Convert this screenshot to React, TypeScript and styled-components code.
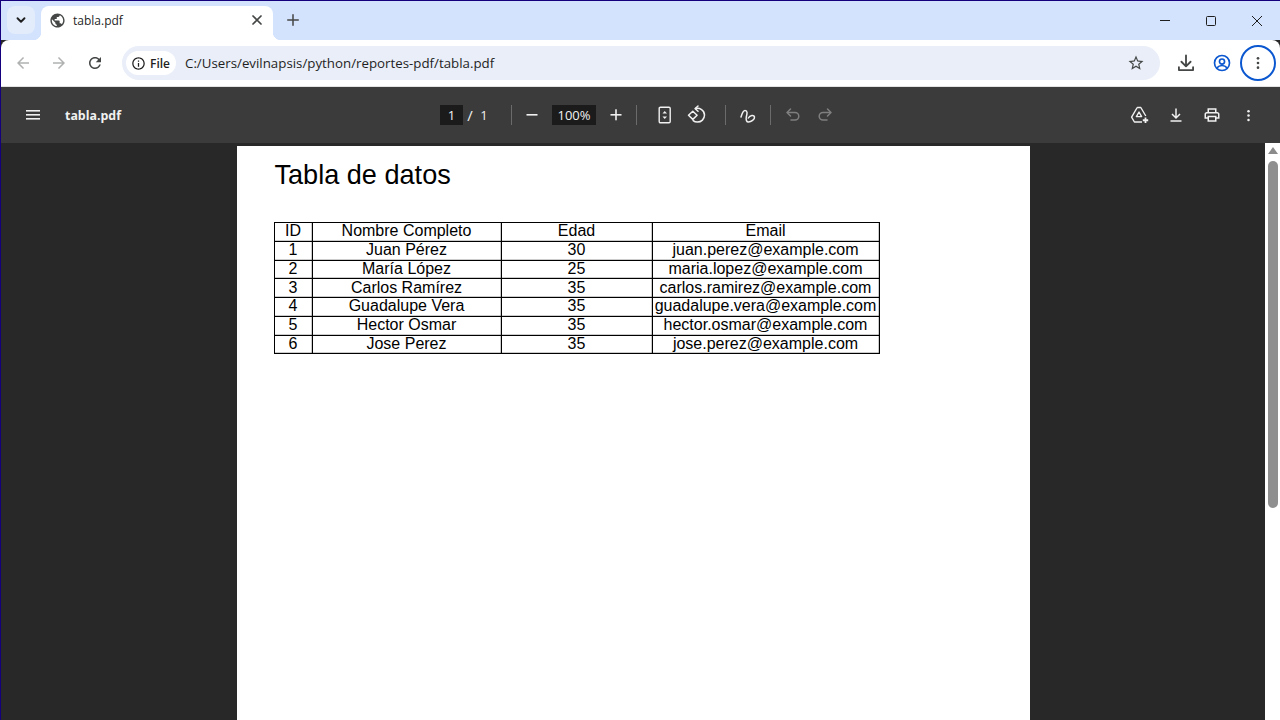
import React from 'react';
import styled, { createGlobalStyle } from 'styled-components';

const GlobalStyle = createGlobalStyle`
  html, body {
    margin: 0;
    padding: 0;
    height: 100%;
    overflow: hidden;
    background: #282828;
  }
`;

const Window = styled.div`
  width: 1280px;
  height: 720px;
  box-sizing: border-box;
  border-top: 1px solid #14007c;
  border-left: 1px solid #14007c;
  display: flex;
  flex-direction: column;
  overflow: hidden;
  font-family: 'Open Sans', 'Noto Sans', sans-serif;
`;

const TabStrip = styled.div`
  height: 39px;
  flex: none;
  background: #d3e3fd;
  display: flex;
  align-items: flex-start;
  padding-left: 6px;
`;

const TabSearch = styled.div`
  width: 28px;
  height: 28px;
  margin-top: 5px;
  border-radius: 8px;
  background: #e3ecfb;
  display: flex;
  align-items: center;
  justify-content: center;
  color: #1f1f1f;
`;

const Tab = styled.div`
  position: relative;
  width: 232px;
  height: 34px;
  margin: 5px 0 0 6px;
  box-sizing: border-box;
  padding: 0 8px 6px;
  border-radius: 8px 8px 0 0;
  background: #fff;
  display: flex;
  align-items: center;
  color: #444746;

  &::before,
  &::after {
    content: '';
    position: absolute;
    bottom: 0;
    width: 8px;
    height: 8px;
  }
  &::before {
    left: -8px;
    background: radial-gradient(circle at 0 0, transparent 8px, #fff 8.5px);
  }
  &::after {
    right: -8px;
    background: radial-gradient(circle at 100% 0, transparent 8px, #fff 8.5px);
  }
`;

const TabTitle = styled.span`
  flex: 1;
  margin-left: 7px;
  font-size: 12px;
  color: #1f1f1f;
`;

const NewTab = styled.div`
  width: 28px;
  height: 28px;
  margin: 5px 0 0 6px;
  display: flex;
  align-items: center;
  justify-content: center;
  color: #444746;
`;

const WindowControls = styled.div`
  margin-left: auto;
  display: flex;
  color: #1f1f1f;
`;

const WindowButton = styled.div`
  width: 46px;
  height: 39px;
  display: flex;
  align-items: center;
  justify-content: center;
`;

const NavBar = styled.div`
  height: 47px;
  flex: none;
  background: #fff;
  border-radius: 8px 8px 0 0;
  display: flex;
  align-items: center;
  padding: 0 4px 0 4px;
  box-sizing: border-box;
  border-bottom: 1px solid #e3e3e3;
`;

const NavButton = styled.div<{ $dim?: boolean }>`
  width: 36px;
  height: 36px;
  display: flex;
  align-items: center;
  justify-content: center;
  color: ${(p) => (p.$dim ? '#b0b1b1' : '#444746')};
`;

const Omnibox = styled.div`
  width: 1038px;
  height: 34px;
  margin-left: 9px;
  box-sizing: border-box;
  padding: 0 15px 0 4px;
  border-radius: 17px;
  background: #e9eef8;
  display: flex;
  align-items: center;
  color: #444746;
`;

const FileChip = styled.div`
  width: 50px;
  height: 24px;
  box-sizing: border-box;
  padding-left: 5px;
  border-radius: 12px;
  background: #fff;
  display: flex;
  align-items: center;
  gap: 4px;
  font-size: 12px;
  font-weight: 600;
  color: #1f1f1f;
`;

const UrlText = styled.span`
  flex: 1;
  margin-left: 9px;
  font-size: 13.3px;
  color: #1f1f1f;
`;

const ToolActions = styled.div`
  display: flex;
  align-items: center;
  margin-left: 8px;
`;

const ToolIcon = styled.div<{ $color?: string; $focus?: boolean }>`
  width: 36px;
  height: 36px;
  box-sizing: border-box;
  display: flex;
  align-items: center;
  justify-content: center;
  border-radius: 50%;
  color: ${(p) => p.$color || '#444746'};
  ${(p) => p.$focus && 'border: 2px solid #0b57d0;'}
`;

const PdfToolbar = styled.div`
  height: 56px;
  flex: none;
  background: #3b3b3b;
  display: flex;
  align-items: center;
  color: #f1f1f1;
`;

const PdfLeft = styled.div`
  width: 439px;
  flex: none;
  display: flex;
  align-items: center;
  box-sizing: border-box;
  padding-left: 14px;
`;

const PdfName = styled.span`
  margin-left: 14px;
  font-size: 12.4px;
  font-weight: 700;
  color: #f1f1f1;
`;

const PdfCenter = styled.div`
  display: flex;
  align-items: center;
`;

const PdfRight = styled.div`
  margin-left: auto;
  margin-right: 14px;
  display: flex;
  align-items: center;
`;

const PdfButton = styled.div<{ $w?: number; $ml?: number; $dim?: boolean }>`
  width: ${(p) => p.$w || 36}px;
  height: 36px;
  margin-left: ${(p) => p.$ml || 0}px;
  display: flex;
  align-items: center;
  justify-content: center;
  color: ${(p) => (p.$dim ? '#7f7f7f' : '#f1f1f1')};
`;

const NumberBox = styled.div<{ $w: number }>`
  width: ${(p) => p.$w}px;
  height: 20px;
  background: #1b1b1b;
  color: #f1f1f1;
  font-size: 13px;
  display: flex;
  align-items: center;
  justify-content: center;
`;

const PageLabel = styled.span<{ $w: number; $size?: number }>`
  width: ${(p) => p.$w}px;
  font-size: ${(p) => p.$size || 13}px;
  text-align: center;
  color: #f1f1f1;
`;

const Separator = styled.div<{ $ml?: number }>`
  width: 1px;
  height: 20px;
  margin-left: ${(p) => p.$ml || 0}px;
  background: #6b6b6b;
`;

const ViewerArea = styled.div`
  flex: 1;
  min-height: 0;
  display: flex;
  background: #282828;
`;

const PageScroller = styled.div`
  flex: 1;
  overflow: hidden;
  display: flex;
  justify-content: center;
`;

const PdfPage = styled.div`
  width: 793px;
  height: 1122px;
  margin-top: 3px;
  box-sizing: border-box;
  padding: 13px 0 0 37px;
  background: #fff;
  font-family: 'Liberation Sans', Arial, sans-serif;
  color: #000;
`;

const DocTitle = styled.h1`
  margin: 0 0 0 1px;
  height: 63px;
  font-size: 27.1px;
  font-weight: 400;
  line-height: 31px;
`;

const DataTable = styled.table`
  width: 605px;
  border-collapse: collapse;
  table-layout: fixed;
  font-size: 16px;

  th, td {
    height: 18.75px;
    padding: 0 0 1px;
    border: 1px solid #000;
    box-sizing: border-box;
    font-weight: 400;
    text-align: center;
    line-height: 16px;
    white-space: nowrap;
    box-shadow: inset 0 -1px 0 rgba(0, 0, 0, 0.2), inset -1px 0 0 rgba(0, 0, 0, 0.2);
  }

  col:nth-child(1) { width: 38px; }
  col:nth-child(2) { width: 189px; }
  col:nth-child(3) { width: 151px; }
  col:nth-child(4) { width: 227px; }
`;

const Scrollbar = styled.div`
  width: 15px;
  flex: none;
  background: #fff;
  display: flex;
  flex-direction: column;
  align-items: center;
`;

const ScrollArrow = styled.div`
  width: 0;
  height: 0;
  margin-top: 4px;
  border-left: 5px solid transparent;
  border-right: 5px solid transparent;
  border-bottom: 7px solid #8b8b8b;
`;

const ScrollThumb = styled.div`
  width: 10px;
  height: 347px;
  margin-top: 7px;
  border-radius: 5px;
  background: #8f8f8f;
`;

const rows = [
  ['1', 'Juan Pérez', '30', 'juan.perez@example.com'],
  ['2', 'María López', '25', 'maria.lopez@example.com'],
  ['3', 'Carlos Ramírez', '35', 'carlos.ramirez@example.com'],
  ['4', 'Guadalupe Vera', '35', 'guadalupe.vera@example.com'],
  ['5', 'Hector Osmar', '35', 'hector.osmar@example.com'],
  ['6', 'Jose Perez', '35', 'jose.perez@example.com'],
];

const Fill = ({ d, size = 16 }: { d: string; size?: number }) => (
  <svg width={size} height={size} viewBox="0 0 24 24" fill="currentColor">
    <path d={d} />
  </svg>
);

const Line = ({ size = 16, sw = 2, children }: { size?: number; sw?: number; children: React.ReactNode }) => (
  <svg width={size} height={size} viewBox="0 0 24 24" fill="none" stroke="currentColor" strokeWidth={sw} strokeLinecap="round" strokeLinejoin="round">
    {children}
  </svg>
);

const globe = 'M12 2C6.48 2 2 6.48 2 12s4.48 10 10 10 10-4.48 10-10S17.52 2 12 2zm-1 17.93c-3.95-.49-7-3.85-7-7.93 0-.62.08-1.21.21-1.79L9 15v1c0 1.1.9 2 2 2v1.93zm6.9-2.54c-.26-.81-1-1.39-1.9-1.39h-1v-3c0-.55-.45-1-1-1H8v-2h2c.55 0 1-.45 1-1V7h2c1.1 0 2-.9 2-2v-.41c2.93 1.19 5 4.06 5 7.41 0 2.08-.8 3.97-2.1 5.39z';
const back = 'M20 11H7.83l5.59-5.59L12 4l-8 8 8 8 1.41-1.41L7.83 13H20v-2z';
const forward = 'M4 11h12.17l-5.59-5.59L12 4l8 8-8 8-1.41-1.41L16.17 13H4v-2z';
const reload = 'M17.65 6.35C16.2 4.9 14.21 4 12 4c-4.42 0-7.99 3.58-7.99 8s3.57 8 7.99 8c3.73 0 6.84-2.55 7.73-6h-2.08c-.82 2.33-3.04 4-5.65 4-3.31 0-6-2.69-6-6s2.69-6 6-6c1.66 0 3.14.69 4.22 1.78L13 11h7V4l-2.35 2.35z';
const info = 'M11 7h2v2h-2zm0 4h2v6h-2zm1-9C6.48 2 2 6.48 2 12s4.48 10 10 10 10-4.48 10-10S17.52 2 12 2zm0 18c-4.41 0-8-3.59-8-8s3.59-8 8-8 8 3.59 8 8-3.59 8-8 8z';
const star = 'M22 9.24l-7.19-.62L12 2 9.19 8.63 2 9.24l5.46 4.73L5.82 21 12 17.27 18.18 21l-1.63-7.03L22 9.24zM12 15.4l-3.76 2.27 1-4.28-3.32-2.88 4.38-.38L12 6.1l1.71 4.04 4.38.38-3.32 2.88 1 4.28L12 15.4z';
const printer = 'M19 8h-1V3H6v5H5c-1.66 0-3 1.34-3 3v6h4v4h12v-4h4v-6c0-1.66-1.34-3-3-3zM8 5h8v3H8V5zm8 14H8v-4h8v4zm4-4h-2v-2H6v2H4v-4c0-.55.45-1 1-1h14c.55 0 1 .45 1 1v4z';

const Dots = ({ size = 16 }: { size?: number }) => (
  <svg width={size} height={size} viewBox="0 0 24 24" fill="currentColor">
    <circle cx="12" cy="5" r="2" />
    <circle cx="12" cy="12" r="2" />
    <circle cx="12" cy="19" r="2" />
  </svg>
);

const App = () => {
  return (
    <Window>
      <GlobalStyle />
      <TabStrip>
        <TabSearch>
          <Line size={14} sw={3.2}><path d="M6 9l6 6 6-6" /></Line>
        </TabSearch>
        <Tab>
          <Fill d={globe} size={17} />
          <TabTitle>tabla.pdf</TabTitle>
          <Line size={16} sw={2.6}><path d="M6 6l12 12M18 6L6 18" /></Line>
        </Tab>
        <NewTab>
          <Line size={18} sw={2}><path d="M12 5v14M5 12h14" /></Line>
        </NewTab>
        <WindowControls>
          <WindowButton>
            <svg width="12" height="12" viewBox="0 0 12 12" fill="none" stroke="currentColor"><path d="M1 5.5h10" /></svg>
          </WindowButton>
          <WindowButton>
            <svg width="12" height="12" viewBox="0 0 12 12" fill="none" stroke="currentColor"><rect x="1.5" y="1.5" width="9" height="9" rx="1" /></svg>
          </WindowButton>
          <WindowButton>
            <svg width="12" height="12" viewBox="0 0 12 12" fill="none" stroke="currentColor"><path d="M1 1l10 10M11 1L1 11" /></svg>
          </WindowButton>
        </WindowControls>
      </TabStrip>

      <NavBar>
        <NavButton $dim><Fill d={back} size={18} /></NavButton>
        <NavButton $dim><Fill d={forward} size={18} /></NavButton>
        <NavButton><Fill d={reload} size={18} /></NavButton>
        <Omnibox>
          <FileChip>
            <Fill d={info} size={15} />
            File
          </FileChip>
          <UrlText>C:/Users/evilnapsis/python/reportes-pdf/tabla.pdf</UrlText>
          <Fill d={star} size={18} />
        </Omnibox>
        <ToolActions>
          <ToolIcon>
            <Line size={20} sw={2.2}>
              <path d="M12 3v13M6.5 10.5L12 16l5.5-5.5M3.5 17v3.5h17V17" />
            </Line>
          </ToolIcon>
          <ToolIcon $color="#0b57d0">
            <svg width="18" height="18" viewBox="0 0 24 24" fill="none" stroke="currentColor" strokeWidth="2.2">
              <circle cx="12" cy="12" r="10" />
              <circle cx="12" cy="10" r="3.4" />
              <path d="M5.2 18.5c2-2.4 4.2-3.2 6.8-3.2s4.8.8 6.8 3.2" />
            </svg>
          </ToolIcon>
          <ToolIcon $focus><Dots /></ToolIcon>
        </ToolActions>
      </NavBar>

      <PdfToolbar>
        <PdfLeft>
          <PdfButton>
            <svg width="16" height="12" viewBox="0 0 16 12" fill="currentColor">
              <rect x="1" y="1" width="14" height="1.6" />
              <rect x="1" y="5" width="14" height="1.6" />
              <rect x="1" y="9" width="14" height="1.6" />
            </svg>
          </PdfButton>
          <PdfName>tabla.pdf</PdfName>
        </PdfLeft>
        <PdfCenter>
          <NumberBox $w={23}>1</NumberBox>
          <PageLabel $w={14} $size={15}>/</PageLabel>
          <PageLabel $w={14}>1</PageLabel>
          <PdfButton $w={20} />
          <Separator />
          <PdfButton $w={40}>
            <svg width="14" height="14" viewBox="0 0 14 14" fill="currentColor"><rect x="1.5" y="6" width="11" height="1.6" /></svg>
          </PdfButton>
          <NumberBox $w={44}>100%</NumberBox>
          <PdfButton $w={40}>
            <svg width="14" height="14" viewBox="0 0 14 14" fill="currentColor"><rect x="1.5" y="6" width="11" height="1.6" /><rect x="6.2" y="1.3" width="1.6" height="11" /></svg>
          </PdfButton>
          <Separator />
          <PdfButton $ml={10}>
            <svg width="14" height="18" viewBox="0 0 14 18" fill="none" stroke="currentColor" strokeWidth="1.4">
              <rect x="1.2" y="1.2" width="11" height="15.6" rx="1.2" />
              <path d="M4.5 7.5L6.7 5 9 7.5z" fill="currentColor" stroke="none" />
              <path d="M4.5 10.5L6.7 13 9 10.5z" fill="currentColor" stroke="none" />
            </svg>
          </PdfButton>
          <PdfButton $w={28}>
            <svg width="20" height="20" viewBox="0 0 20 20" fill="none" stroke="currentColor" strokeWidth="1.5" strokeLinejoin="round" strokeLinecap="round">
              <path d="M1.5 10.2L5.8 6.2l4.3 4L5.8 14.4z" />
              <path d="M8.5 3.6c4.2-1 9 1.6 9 6.5 0 4-3.2 7-7 7-1.700 0-3.200-.5-4.300-1.500" />
              <path d="M11 1L8.2 3.6 11 6.2" />
            </svg>
          </PdfButton>
          <Separator $ml={14} />
          <PdfButton $w={42}>
            <svg width="18" height="18" viewBox="0 0 18 18" fill="none" stroke="currentColor" strokeWidth="1.5" strokeLinecap="round" strokeLinejoin="round">
              <path d="M3 11C4 8 5 4.600 7 4.600 10 4.600 9 8 8.300 11 7.800 14 8.500 16 10.500 16 13 16 17 13.500 16.500 11 16 8.500 12 9 10.300 12" />
            </svg>
          </PdfButton>
          <Separator $ml={2} />
          <PdfButton $w={44} $dim>
            <svg width="16" height="16" viewBox="0 0 16 16" fill="none" stroke="currentColor" strokeWidth="1.5" strokeLinecap="round" strokeLinejoin="round">
              <path d="M5.5 2L2 5.5 5.5 9" />
              <path d="M2.5 5.5H10a3.8 3.8 0 0 1 0 7.600H6" />
            </svg>
          </PdfButton>
          <PdfButton $w={20} $dim>
            <svg width="16" height="16" viewBox="0 0 16 16" fill="none" stroke="currentColor" strokeWidth="1.5" strokeLinecap="round" strokeLinejoin="round">
              <path d="M10.5 2L14 5.5 10.5 9" />
              <path d="M13.5 5.5H6a3.8 3.8 0 0 0 0 7.600h4" />
            </svg>
          </PdfButton>
        </PdfCenter>
        <PdfRight>
          <PdfButton>
            <svg width="20" height="18" viewBox="0 0 20 18" fill="none" stroke="currentColor" strokeWidth="1.4" strokeLinejoin="round">
              <path d="M7.2 1.500h3.600l5 8.500M7.200 1.500L1.600 11.200l2.800 4.800h7.600" />
              <path d="M9 6l-2.600 4.600h5.200z" />
              <path d="M15.500 11.500v5.500M12.800 14.250h5.400" strokeWidth="1.8" />
            </svg>
          </PdfButton>
          <PdfButton>
            <svg width="16" height="16" viewBox="0 0 16 16" fill="none" stroke="currentColor" strokeWidth="1.5">
              <path d="M8 1.500v9M4 7l4 4 4-4M2.500 14h11" />
            </svg>
          </PdfButton>
          <PdfButton><Fill d={printer} size={18} /></PdfButton>
          <PdfButton><Dots size={15} /></PdfButton>
        </PdfRight>
      </PdfToolbar>

      <ViewerArea>
        <PageScroller>
          <PdfPage>
            <DocTitle>Tabla de datos</DocTitle>
            <DataTable>
              <colgroup>
                <col />
                <col />
                <col />
                <col />
              </colgroup>
              <thead>
                <tr>
                  <th>ID</th>
                  <th>Nombre Completo</th>
                  <th>Edad</th>
                  <th>Email</th>
                </tr>
              </thead>
              <tbody>
                {rows.map((r) => (
                  <tr key={r[0]}>
                    {r.map((c) => (
                      <td key={c}>{c}</td>
                    ))}
                  </tr>
                ))}
              </tbody>
            </DataTable>
          </PdfPage>
        </PageScroller>
        <Scrollbar>
          <ScrollArrow />
          <ScrollThumb />
        </Scrollbar>
      </ViewerArea>
    </Window>
  );
};

export default App;
